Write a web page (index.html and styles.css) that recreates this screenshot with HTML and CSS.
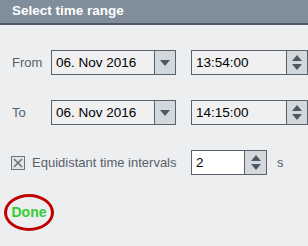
FILE: index.html
```html
<!DOCTYPE html>
<html>
<head>
<meta charset="utf-8">
<link rel="stylesheet" href="styles.css">
</head>
<body>
<div class="panel">
  <div class="header">Select time range</div>
  <div class="content">
    <div class="row">
      <span class="label">From</span>
      <div class="combo">
        <span class="value">06. Nov 2016</span>
        <span class="btn"><span class="tri-down"></span></span>
      </div>
      <div class="spin time">
        <span class="value">13:54:00</span>
        <span class="btn spinbtn"><span class="tri-up"></span><span class="tri-down"></span></span>
      </div>
    </div>
    <div class="row">
      <span class="label">To</span>
      <div class="combo">
        <span class="value">06. Nov 2016</span>
        <span class="btn"><span class="tri-down"></span></span>
      </div>
      <div class="spin time">
        <span class="value">14:15:00</span>
        <span class="btn spinbtn"><span class="tri-up"></span><span class="tri-down"></span></span>
      </div>
    </div>
    <div class="row">
      <span class="check-label">
        <span class="checkbox"><svg width="10" height="10" viewBox="0 0 10 10"><path d="M1 1 L9 9 M9 1 L1 9" stroke="#6b737c" stroke-width="1.6" fill="none"/></svg></span>
        Equidistant time intervals
      </span>
      <div class="spin count">
        <span class="value">2</span>
        <span class="btn spinbtn"><span class="tri-up"></span><span class="tri-down"></span></span>
      </div>
      <span class="unit">s</span>
    </div>
    <div class="done-row">
      <span class="done">Done</span>
    </div>
  </div>
</div>
</body>
</html>
```
FILE: styles.css
```css
html, body {
  margin: 0;
  padding: 0;
}
body {
  background: #edeef0;
  font-family: "Liberation Sans", Arial, sans-serif;
  font-size: 13px;
  color: #56606a;
  width: 308px;
  height: 246px;
  overflow: hidden;
}
.header {
  height: 23px;
  background: #808d9a;
  border-bottom: 2px solid #4e5965;
  color: #ffffff;
  font-weight: bold;
  font-size: 13.5px;
  line-height: 22px;
  padding-left: 12px;
}
.content {
  padding-top: 25px;
}
.row {
  display: flex;
  align-items: center;
  height: 25px;
  margin-bottom: 25px;
}
.label {
  width: 39px;
  padding-left: 12px;
}
.combo, .spin {
  display: flex;
  height: 25px;
  box-sizing: border-box;
  border: 1px solid #58626d;
  background: #f0f0f0;
}
.combo {
  width: 125px;
}
.time {
  width: 117px;
  margin-left: 15px;
}
.value {
  flex: 1;
  color: #000;
  font-size: 13.5px;
  line-height: 23px;
  padding-left: 4px;
}
.btn {
  width: 20px;
  border-left: 1px solid #58626d;
  background: #d3d8dd;
  display: flex;
  align-items: center;
  justify-content: center;
}
.spinbtn {
  flex-direction: column;
  gap: 3px;
}
.tri-down {
  width: 0;
  height: 0;
  border-left: 5px solid transparent;
  border-right: 5px solid transparent;
  border-top: 6px solid #4e5965;
}
.tri-up {
  width: 0;
  height: 0;
  border-left: 5px solid transparent;
  border-right: 5px solid transparent;
  border-bottom: 6px solid #4e5965;
}
.check-label {
  display: flex;
  align-items: center;
  width: 179px;
  padding-left: 11px;
  box-sizing: border-box;
  width: 191px;
}
.checkbox {
  width: 12px;
  height: 12px;
  border: 1px solid #6b737c;
  background: #e3e5e8;
  display: flex;
  align-items: center;
  justify-content: center;
  margin-right: 7px;
}
.count {
  width: 76px;
  background: #ffffff;
}
.count .btn {
  width: 21px;
}
.unit {
  margin-left: 10px;
}
.done-row {
  margin-top: -6px;
  padding-left: 4px;
}
.done {
  display: inline-block;
  width: 44px;
  height: 31px;
  border: 3px solid #c00000;
  border-radius: 50%;
  text-align: center;
  line-height: 31px;
  color: #33cc33;
  font-weight: bold;
  font-size: 14px;
}
```
